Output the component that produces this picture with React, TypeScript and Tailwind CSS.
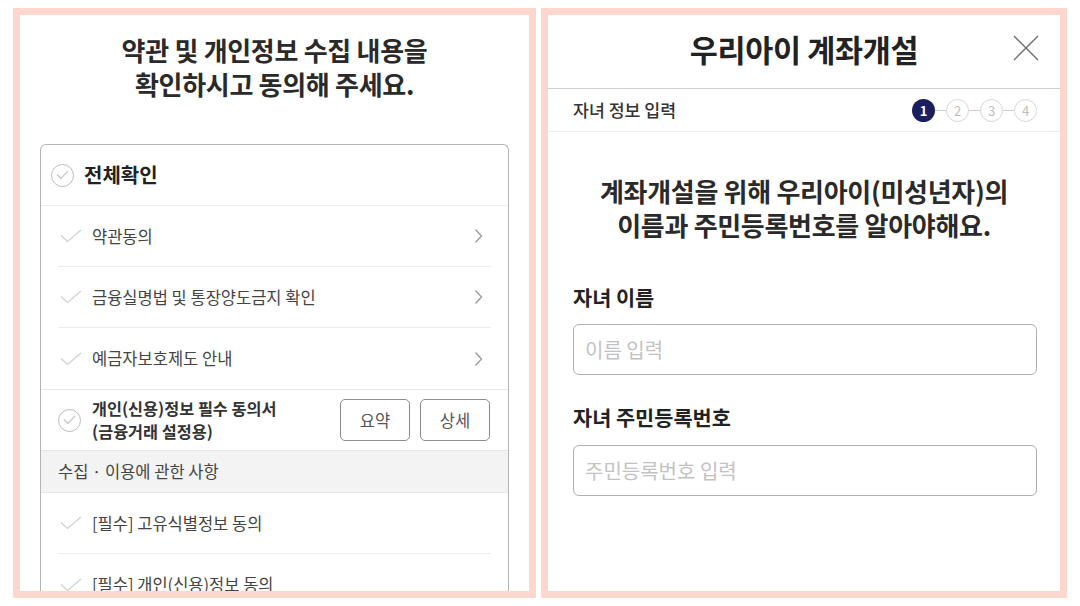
const font = "font-['Noto_Sans_CJK_KR','Noto_Sans',sans-serif]";

const Check = () => (
  <svg width="22" height="14" viewBox="0 0 22 14" className="shrink-0">
    <path d="M1 6.5 L7.5 12.5 L21 1" fill="none" stroke="#d2d2d2" strokeWidth="1.3" />
  </svg>
);

const CircleCheck = () => (
  <span className="flex h-[23px] w-[23px] shrink-0 items-center justify-center rounded-full border border-[#bdbdbd]">
    <svg width="13" height="10" viewBox="0 0 13 10">
      <path d="M1 4.5 L4.8 8.3 L12 1" fill="none" stroke="#c4c4c4" strokeWidth="1.2" />
    </svg>
  </span>
);

const Chevron = () => (
  <svg width="9" height="16" viewBox="0 0 9 16" className="shrink-0">
    <path d="M1.5 1.5 L7.5 8 L1.5 14.5" fill="none" stroke="#9a9a9a" strokeWidth="1.3" />
  </svg>
);

const TermRow = ({ label, arrow = true, line = true }: { label: string; arrow?: boolean; line?: boolean }) => (
  <div className={`mx-[17px] flex h-[61px] items-center pr-[8px] ${line ? "border-b border-[#ececec]" : ""}`}>
    <span className="ml-[2px]">
      <Check />
    </span>
    <span className="ml-[10px] flex-1 text-[16.5px] text-[#444]">{label}</span>
    {arrow && <Chevron />}
  </div>
);

const Step = ({ n, active = false }: { n: number; active?: boolean }) =>
  active ? (
    <span className="flex h-[23px] w-[23px] items-center justify-center rounded-full bg-[#1c1f5b] text-[13px] font-bold leading-none text-white">
      {n}
    </span>
  ) : (
    <span className="flex h-[23px] w-[23px] items-center justify-center rounded-full border border-[#d6d6d6] text-[13px] leading-none text-[#bdbdbd]">
      {n}
    </span>
  );

const StepLine = () => <span className="h-px w-[11px] bg-[#cfcfcf]" />;

export default function App() {
  return (
    <div className={`flex h-[606px] w-[1080px] gap-[5px] bg-white px-[13px] py-[8px] text-[#222] ${font}`}>
      {/* 약관 동의 */}
      <div className="flex w-[523px] flex-col overflow-hidden border-[7px] border-[#fdd6cd] bg-white">
        <h2 className="pt-[18px] text-center text-[26px] font-semibold leading-[34px] tracking-[-0.3px] text-[#2a2a2a]">
          약관 및 개인정보 수집 내용을
          <br />
          확인하시고 동의해 주세요.
        </h2>

        <div className="mx-[20px] mt-[43px] flex-1 rounded-t-[6px] border border-b-0 border-[#b4b4b4]">
          <div className="flex h-[61px] items-center gap-[10px] border-b border-[#ececec] pl-[10px]">
            <CircleCheck />
            <span className="text-[20px] font-bold text-[#222]">전체확인</span>
          </div>
          <TermRow label="약관동의" />
          <TermRow label="금융실명법 및 통장양도금지 확인" />
          <TermRow label="예금자보호제도 안내" line={false} />

          <div className="flex h-[61px] items-center border-t border-[#e6e6e6] pl-[17px] pr-[18px]">
            <CircleCheck />
            <div className="ml-[11px] flex flex-1 flex-col text-[16.3px] font-bold leading-[23px] text-[#333]">
              <span>개인(신용)정보 필수 동의서</span>
              <span>(금융거래 설정용)</span>
            </div>
            <div className="flex gap-[10px]">
              <button className="h-[42px] w-[70px] rounded-[5px] border border-[#8c8c8c] text-[16.5px] text-[#555]">요약</button>
              <button className="h-[42px] w-[70px] rounded-[5px] border border-[#8c8c8c] text-[16.5px] text-[#555]">상세</button>
            </div>
          </div>

          <div className="flex h-[43px] items-center border-y border-[#e6e6e6] bg-[#f3f3f3] pl-[17px] text-[16.5px] text-[#444]">
            수집 · 이용에 관한 사항
          </div>
          <TermRow label="[필수] 고유식별정보 동의" arrow={false} />
          <TermRow label="[필수] 개인(신용)정보 동의" arrow={false} line={false} />
        </div>
      </div>

      {/* 우리아이 계좌개설 */}
      <div className="flex w-[526px] flex-col overflow-hidden border-[7px] border-[#fdd6cd] bg-white">
        <div className="relative flex h-[74px] items-center justify-center border-b border-[#cfcfcf] pb-[4px]">
          <h1 className="text-[30.5px] font-bold tracking-[-0.3px] text-[#222]">우리아이 계좌개설</h1>
          <svg width="26" height="26" viewBox="0 0 26 26" className="absolute right-[21px] top-[20px]">
            <path d="M1 1 L25 25 M25 1 L1 25" stroke="#6f6f6f" strokeWidth="1.4" />
          </svg>
        </div>

        <div className="flex h-[43px] items-center justify-between border-b border-[#ebebeb] pl-[25px] pr-[23px]">
          <span className="text-[17.3px] font-medium text-[#333]">자녀 정보 입력</span>
          <div className="flex items-center">
            <Step n={1} active />
            <StepLine />
            <Step n={2} />
            <StepLine />
            <Step n={3} />
            <StepLine />
            <Step n={4} />
          </div>
        </div>

        <p className="mt-[42px] text-center text-[26px] font-semibold leading-[34px] tracking-[-0.3px] text-[#2a2a2a]">
          계좌개설을 위해 우리아이(미성년자)의
          <br />
          이름과 주민등록번호를 알아야해요.
        </p>

        <div className="flex flex-col pl-[25px] pr-[23px]">
          <label className="mt-[41px] text-[20.8px] font-bold leading-[28px] text-[#222]">자녀 이름</label>
          <input
            placeholder="이름 입력"
            className="mt-[13px] h-[51px] rounded-[6px] border border-[#b0b0b0] px-[11px] text-[20px] placeholder:text-[#c2c2c2] focus:outline-none"
          />
          <label className="mt-[28px] text-[20.8px] font-bold leading-[28px] text-[#222]">자녀 주민등록번호</label>
          <input
            placeholder="주민등록번호 입력"
            className="mt-[14px] h-[51px] rounded-[6px] border border-[#b0b0b0] px-[11px] text-[20px] placeholder:text-[#c2c2c2] focus:outline-none"
          />
        </div>
      </div>
    </div>
  );
}
